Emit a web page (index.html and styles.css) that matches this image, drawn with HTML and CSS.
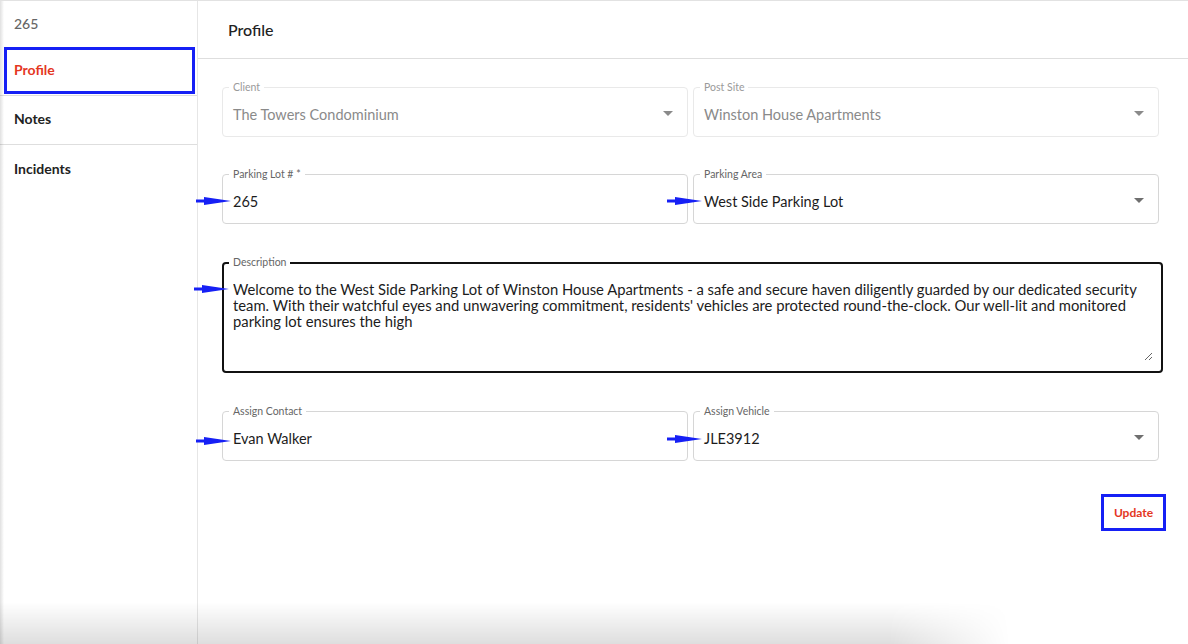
FILE: index.html
```html
<!DOCTYPE html>
<html lang="en">
<head>
    <meta charset="UTF-8">
    <meta name="viewport" content="width=device-width, initial-scale=1.0">
    <title>Parking Lot 265 - Profile</title>
    <link rel="stylesheet" href="styles.css">
</head>
<body>
    <div class="app">
        <aside class="sidebar">
            <div class="sidebar-title">265</div>
            <nav class="nav">
                <a class="nav-item active">Profile</a>
                <a class="nav-item">Notes</a>
                <a class="nav-item no-border">Incidents</a>
            </nav>
        </aside>

        <main class="main">
            <header class="page-header">Profile</header>

            <form class="profile-form">
                <div class="field disabled">
                    <span class="field-label">Client</span>
                    <span class="field-value">The Towers Condominium</span>
                    <span class="caret"></span>
                </div>
                <div class="field disabled">
                    <span class="field-label">Post Site</span>
                    <span class="field-value">Winston House Apartments</span>
                    <span class="caret"></span>
                </div>

                <div class="field">
                    <span class="field-label">Parking Lot # *</span>
                    <span class="field-value">265</span>
                    <span class="pointer pointer-lot"><svg viewBox="0 0 36 10"><polygon points="0,3.6 8,3.6 8,1 35,5 8,9 8,6.4 0,6.4"/></svg></span>
                </div>
                <div class="field">
                    <span class="field-label">Parking Area</span>
                    <span class="field-value">West Side Parking Lot</span>
                    <span class="caret"></span>
                    <span class="pointer pointer-area"><svg viewBox="0 0 36 10"><polygon points="0,3.6 8,3.6 8,1 35,5 8,9 8,6.4 0,6.4"/></svg></span>
                </div>

                <div class="field field-description">
                    <span class="field-label">Description</span>
                    <textarea class="description-input">Welcome to the West Side Parking Lot of Winston House Apartments - a safe and secure haven diligently guarded by our dedicated security team. With their watchful eyes and unwavering commitment, residents' vehicles are protected round-the-clock. Our well-lit and monitored parking lot ensures the high</textarea>
                    <span class="pointer pointer-desc"><svg viewBox="0 0 36 10"><polygon points="0,3.6 8,3.6 8,1 35,5 8,9 8,6.4 0,6.4"/></svg></span>
                </div>

                <div class="field">
                    <span class="field-label">Assign Contact</span>
                    <span class="field-value">Evan Walker</span>
                    <span class="pointer pointer-contact"><svg viewBox="0 0 36 10"><polygon points="0,3.6 8,3.6 8,1 35,5 8,9 8,6.4 0,6.4"/></svg></span>
                </div>
                <div class="field">
                    <span class="field-label">Assign Vehicle</span>
                    <span class="field-value">JLE3912</span>
                    <span class="caret"></span>
                    <span class="pointer pointer-vehicle"><svg viewBox="0 0 36 10"><polygon points="0,3.6 8,3.6 8,1 35,5 8,9 8,6.4 0,6.4"/></svg></span>
                </div>

                <div class="form-actions">
                    <button type="button" class="update-btn">Update</button>
                </div>
            </form>
        </main>

        <div class="edge-shade"></div>
        <div class="bottom-shade"></div>
    </div>
</body>
</html>
```

FILE: styles.css
```css
:root {
    --text-color: #222222;
    --muted-color: #666666;
    --accent-red: #e4371f;
    --mark-blue: #1620f5;
    --border-color: #d6d6d6;
    --divider-color: #dedede;
}
body {
    font-family: Lato, "Open Sans", sans-serif;
    margin: 0;
    padding: 0;
    background-color: #ffffff;
    color: var(--text-color);
}
.app {
    position: relative;
    display: flex;
    height: 644px;
    box-sizing: border-box;
    border-top: 1px solid #e2e2e2;
    overflow: hidden;
}
.sidebar {
    width: 197px;
    flex-shrink: 0;
    border-right: 1px solid #e6e6e6;
}
.sidebar-title {
    height: 46px;
    display: flex;
    align-items: center;
    padding-left: 14px;
    padding-bottom: 2px;
    box-sizing: border-box;
    font-size: 14px;
    color: var(--muted-color);
    font-weight: 500;
}
.nav {
    display: flex;
    flex-direction: column;
}
.nav-item {
    position: relative;
    height: 49px;
    box-sizing: border-box;
    display: flex;
    align-items: center;
    padding: 0 0 3px 14px;
    border-bottom: 1px solid var(--divider-color);
    font-size: 14px;
    font-weight: 700;
    color: var(--text-color);
}
.nav-item.no-border {
    border-bottom: none;
}
.nav-item.active {
    color: var(--accent-red);
}
.nav-item.active::after {
    content: "";
    position: absolute;
    left: 4px;
    right: 2px;
    top: 0;
    bottom: 1px;
    border: 3px solid var(--mark-blue);
}
.main {
    flex: 1;
}
.page-header {
    height: 57px;
    display: flex;
    align-items: center;
    padding-left: 30px;
    border-bottom: 1px solid var(--divider-color);
    font-size: 16px;
    font-weight: 500;
    color: var(--text-color);
}
.profile-form {
    display: grid;
    grid-template-columns: 466px 466px;
    column-gap: 5px;
    row-gap: 37px;
    padding: 28px 22px 0 24px;
}
.field {
    position: relative;
    height: 50px;
    box-sizing: border-box;
    border: 1px solid var(--border-color);
    border-radius: 4px;
    display: flex;
    align-items: center;
    padding: 5px 14px 0 10px;
}
.field-label {
    position: absolute;
    top: -7px;
    left: 6px;
    padding: 0 4px;
    background-color: #ffffff;
    font-size: 10.5px;
    line-height: 13px;
    color: var(--muted-color);
}
.field-value {
    flex: 1;
    font-size: 14.5px;
    color: #1c1c1c;
}
.caret {
    width: 0;
    height: 0;
    margin-top: -3px;
    border-left: 5px solid transparent;
    border-right: 5px solid transparent;
    border-top: 5px solid #6f6f6f;
}
.field.disabled {
    border-color: #e9e9e9;
}
.field.disabled .field-label {
    color: #9a9a9a;
}
.field.disabled .field-value {
    color: #8a8a8a;
}
.field.disabled .caret {
    border-top-color: #8a8a8a;
}
.field-description {
    grid-column: 1 / -1;
    height: 111px;
    margin: 1px -4px 1px 0;
    border: 2px solid #111111;
    align-items: stretch;
    padding: 17px 8px 10px 9px;
}
.field-description .field-label {
    top: -8px;
    left: 5px;
}
.description-input {
    flex: 1;
    border: none;
    outline: none;
    padding: 0;
    margin: 0;
    resize: vertical;
    font-family: Lato, "Open Sans", sans-serif;
    font-size: 14.8px;
    line-height: 16px;
    color: #1c1c1c;
    background: transparent;
}
.pointer {
    position: absolute;
    width: 36px;
    height: 10px;
    left: -27px;
    top: 21px;
}
.pointer svg {
    display: block;
    width: 100%;
    height: 100%;
    fill: var(--mark-blue);
}
.pointer-desc {
    left: -30px;
    top: 20px;
}
.pointer-contact {
    top: 24px;
}
.pointer-vehicle {
    top: 22px;
}
.form-actions {
    grid-column: 1 / -1;
    display: flex;
    justify-content: flex-end;
    margin-top: -4px;
    margin-right: -7px;
}
.update-btn {
    width: 65px;
    height: 37px;
    box-sizing: border-box;
    border: 3px solid var(--mark-blue);
    background: #ffffff;
    color: var(--accent-red);
    font-family: Lato, "Open Sans", sans-serif;
    font-size: 12px;
    font-weight: 700;
    padding: 0;
    cursor: pointer;
}
.edge-shade {
    position: absolute;
    left: 0;
    top: 0;
    bottom: 0;
    width: 4px;
    background: linear-gradient(to right, rgba(0, 0, 0, 0.12), rgba(0, 0, 0, 0));
    pointer-events: none;
}
.bottom-shade {
    position: absolute;
    left: 0;
    bottom: 0;
    width: 1010px;
    height: 42px;
    background: linear-gradient(to bottom, rgba(0, 0, 0, 0), rgba(0, 0, 0, 0.13));
    -webkit-mask-image: linear-gradient(to right, #000 88%, transparent 100%);
    mask-image: linear-gradient(to right, #000 88%, transparent 100%);
    pointer-events: none;
}
```
